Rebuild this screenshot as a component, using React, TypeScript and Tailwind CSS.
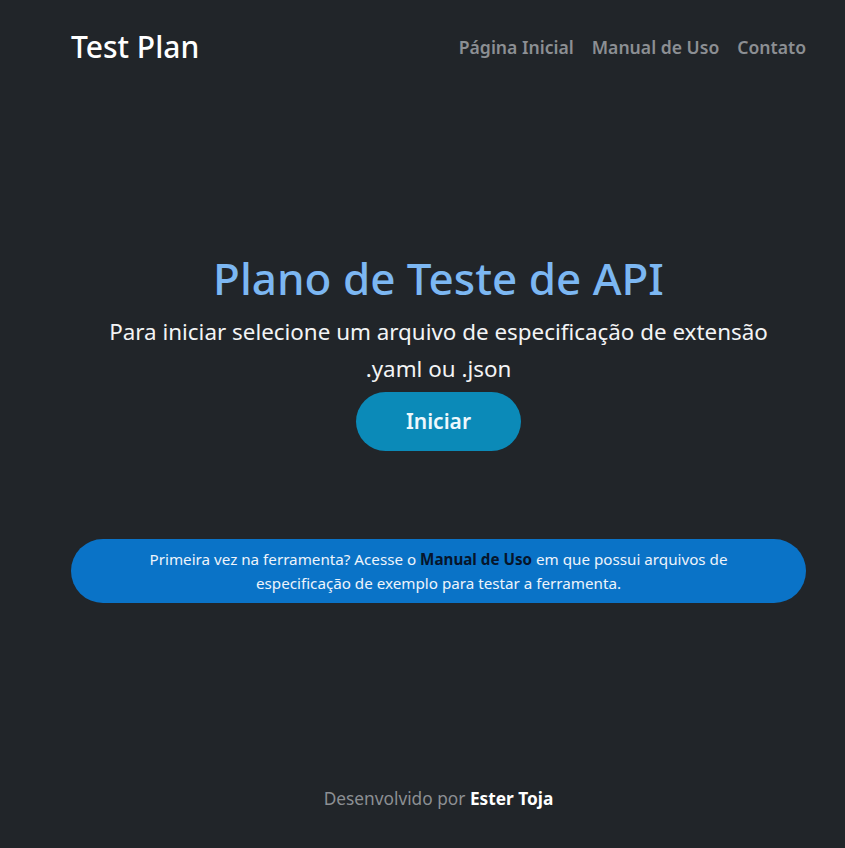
import React from "react";

const links = ["Página Inicial", "Manual de Uso", "Contato"];

export default function App() {
  return (
    <div className="min-h-screen bg-[#212529] font-['Noto_Sans',sans-serif] text-white">
      <header className="flex items-center justify-between pl-[71px] pr-[39px] pt-[29px]">
        <a className="text-[30px] leading-[36px] font-medium text-white">Test Plan</a>
        <nav className="flex items-center gap-[18px]">
          {links.map((l) => (
            <a key={l} className="text-[17.6px] leading-[26px] font-semibold text-[#8c8f93]">
              {l}
            </a>
          ))}
        </nav>
      </header>

      <main className="pl-[71px] pr-[39px] text-center">
        <h1 className="mt-[187px] text-[44px] leading-[53px] font-medium text-[#7cb7f2]">
          Plano de Teste de API
        </h1>
        <p className="mx-auto mt-[8px] max-w-[700px] text-[22.4px] leading-[37px] text-[#f3f4f5]">
          Para iniciar selecione um arquivo de especificação de extensão .yaml ou .json
        </p>
        <button className="mt-[5px] h-[59px] w-[165px] rounded-full bg-[#0b8ab8] text-[21px] font-semibold text-[#eef8fc]">
          Iniciar
        </button>

        <div className="mt-[88px] flex h-[64px] items-center justify-center rounded-full bg-[#0a73c7] px-10">
          <p className="max-w-[620px] text-[15.2px] leading-[24px] text-[#eef4fb]">
            Primeira vez na ferramenta? Acesse o{" "}
            <a className="font-bold text-[#06152b]">Manual de Uso</a> em que possui arquivos de
            especificação de exemplo para testar a ferramenta.
          </p>
        </div>
      </main>

      <footer className="mt-[183px] pl-[71px] pr-[39px] text-center text-[17.3px] leading-[26px] text-[#8c8f93]">
        Desenvolvido por <span className="font-bold text-white">Ester Toja</span>
      </footer>
    </div>
  );
}
